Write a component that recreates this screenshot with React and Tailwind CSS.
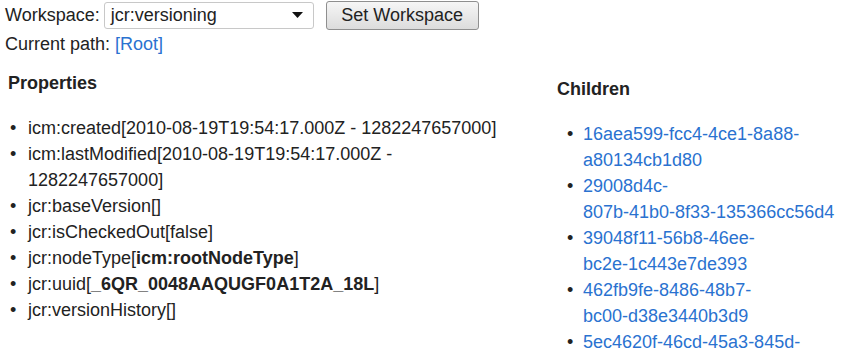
import React from 'react'

const props = [
  ['icm:created', '2010-08-19T19:54:17.000Z - 1282247657000', false],
  ['icm:lastModified', '2010-08-19T19:54:17.000Z - 1282247657000', false],
  ['jcr:baseVersion', '', false],
  ['jcr:isCheckedOut', 'false', false],
  ['jcr:nodeType', 'icm:rootNodeType', true],
  ['jcr:uuid', '_6QR_0048AAQUGF0A1T2A_18L', true],
  ['jcr:versionHistory', '', false],
]

// wrapped the same way the old browser did it
const children = [
  ['16aea599-fcc4-4ce1-8a88-', 'a80134cb1d80'],
  ['29008d4c-', '807b-41b0-8f33-135366cc56d4'],
  ['39048f11-56b8-46ee-', 'bc2e-1c443e7de393'],
  ['462fb9fe-8486-48b7-', 'bc00-d38e3440b3d9'],
  ['5ec4620f-46cd-45a3-845d-', '8a1f0c2b7e61'],
]

export default function App() {
  return (
    <div className="h-[354px] overflow-hidden bg-white text-[18px] leading-[26px] text-[#222] font-['Liberation_Sans',Arial,sans-serif]">
      {/* Workspace bar */}
      <div className="flex items-center pl-[5px] pt-[1px] h-[29px]">
        <span>Workspace:</span>
        <div className="ml-[4px] flex items-center justify-between w-[210px] h-[27px] border border-[#c8c8c8] rounded-[3px] pl-[6px] pr-[10px]">
          <span>jcr:versioning</span>
          <svg width="11" height="6" viewBox="0 0 11 6"><path d="M0 0h11L5.5 6z" fill="#111" /></svg>
        </div>
        <button className="ml-[12px] h-[29px] w-[153px] rounded-[3px] border border-[#8f8f8f] bg-gradient-to-b from-[#f6f6f6] to-[#dcdcdc] text-[18px]">
          Set Workspace
        </button>
      </div>
      <div className="pl-[5px] mt-[2px]">
        Current path: <a className="text-[#2a72d0]">[Root]</a>
      </div>

      <div className="flex mt-[13px]">
        <div className="w-[557px] pl-[8px] shrink-0">
          <h3 className="font-bold">Properties</h3>
          <ul className="mt-[19px] pl-[20px] w-[500px]">
            {props.map(([k, v, bold]) => (
              <li key={k} className="flex">
                <span className="w-[20px] -ml-[20px] shrink-0 pl-[2px]">•</span>
                <div>
                  {k}[<b className={bold ? 'font-bold' : 'font-normal'}>{v}</b>]
                </div>
              </li>
            ))}
          </ul>
        </div>
        <div className="flex-1 pt-[6px]">
          <h3 className="font-bold">Children</h3>
          <ul className="mt-[19px] pl-[26px]">
            {children.map(([a, b]) => (
              <li key={a} className="flex">
                <span className="w-[16px] -ml-[16px] shrink-0">•</span>
                <a className="text-[#2a72d0] whitespace-nowrap">
                  {a}
                  <br />
                  {b}
                </a>
              </li>
            ))}
          </ul>
        </div>
      </div>
    </div>
  )
}
